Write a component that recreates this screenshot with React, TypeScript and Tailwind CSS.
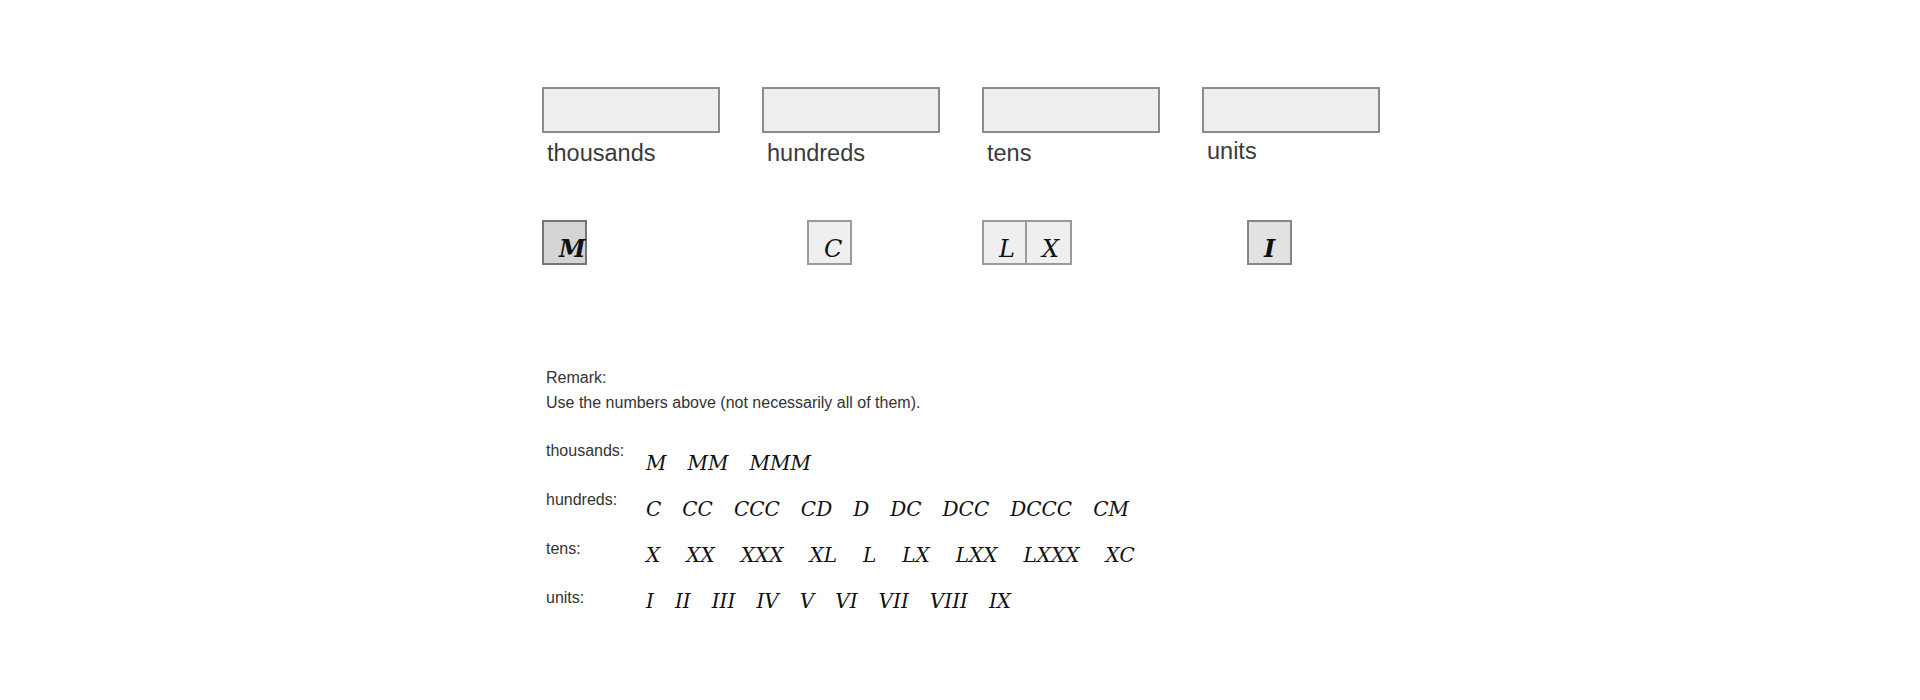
type Column = {
  label: string;
  labelOffset: string;
  slots: (Tile | null)[];
};

type Tile = {
  glyph: string;
  picked: boolean;
};

const columns: Column[] = [
  {
    label: "thousands",
    labelOffset: "mt-[7px]",
    slots: [{ glyph: "M", picked: true }],
  },
  {
    label: "hundreds",
    labelOffset: "mt-[7px]",
    slots: [null, { glyph: "C", picked: false }],
  },
  {
    label: "tens",
    labelOffset: "mt-[7px]",
    slots: [
      { glyph: "L", picked: false },
      { glyph: "X", picked: false },
    ],
  },
  {
    label: "units",
    labelOffset: "mt-[5px]",
    slots: [null, { glyph: "I", picked: true }],
  },
];

const numerals = [
  { label: "thousands:", gap: "gap-[21px]", items: ["M", "MM", "MMM"] },
  {
    label: "hundreds:",
    gap: "gap-[21px]",
    items: ["C", "CC", "CCC", "CD", "D", "DC", "DCC", "DCCC", "CM"],
  },
  {
    label: "tens:",
    gap: "gap-[26px]",
    items: ["X", "XX", "XXX", "XL", "L", "LX", "LXX", "LXXX", "XC"],
  },
  {
    label: "units:",
    gap: "gap-[21px]",
    items: ["I", "II", "III", "IV", "V", "VI", "VII", "VIII", "IX"],
  },
];

function TileSlot({ tile, joined }: { tile: Tile | null; joined: boolean }) {
  if (!tile) return <div className="h-[45px] w-[45px]" />;
  return (
    <div
      className={
        "h-[45px] w-[45px] overflow-visible whitespace-nowrap border-2 pl-[15px] pt-[15px] font-['DejaVu_Serif',serif] text-[24px] italic leading-none text-[#111] " +
        (tile.picked
          ? tile.glyph === "M"
            ? "border-[#757575] bg-[#d4d4d4] font-bold"
            : "border-[#858585] bg-[#e2e2e2] font-bold"
          : "border-[#9a9a9a] bg-[#efefef]") +
        (joined ? " border-l-0" : "")
      }
    >
      {tile.glyph}
    </div>
  );
}

export default function App() {
  return (
    <div className="min-h-[700px] bg-white pl-[2px] pt-[87px] font-['Liberation_Sans',Arial,sans-serif]">
      <div className="mx-auto w-[838px]">
        <div className="grid grid-cols-4 gap-x-[42px]">
          {columns.map((col) => (
            <div key={col.label}>
              <div className="h-[46px] border-2 border-[#8c8c8c] bg-[#eeeeee]" />
              <div
                className={
                  col.labelOffset +
                  " h-[27px] pl-[5px] text-[23.5px] leading-[27px] text-[#3a3a3a]"
                }
              >
                {col.label}
              </div>
            </div>
          ))}
        </div>

        <div className="mt-[53px] grid grid-cols-4 gap-x-[42px]">
          {columns.map((col) => (
            <div key={col.label} className="flex">
              {col.slots.map((tile, i) => (
                <TileSlot
                  key={i}
                  tile={tile}
                  joined={i > 0 && col.slots[i - 1] !== null}
                />
              ))}
            </div>
          ))}
        </div>

        <div className="mt-[100px] pl-[4px] text-[16px] leading-[25px] text-[#333333]">
          <p>Remark:</p>
          <p>Use the numbers above (not necessarily all of them).</p>

          <div className="mt-[23px] flex">
            <div className="flex w-[100px] flex-col gap-[24px]">
              {numerals.map((row) => (
                <div key={row.label} className="leading-[25px]">
                  {row.label}
                </div>
              ))}
            </div>
            <div className="flex flex-col gap-[16px] pt-[10px]">
              {numerals.map((row) => (
                <div
                  key={row.label}
                  className={
                    row.gap +
                    " flex font-['DejaVu_Serif',serif] text-[20px] italic leading-[30px] text-[#111]"
                  }
                >
                  {row.items.map((n) => (
                    <span key={n}>{n}</span>
                  ))}
                </div>
              ))}
            </div>
          </div>
        </div>
      </div>
    </div>
  );
}
